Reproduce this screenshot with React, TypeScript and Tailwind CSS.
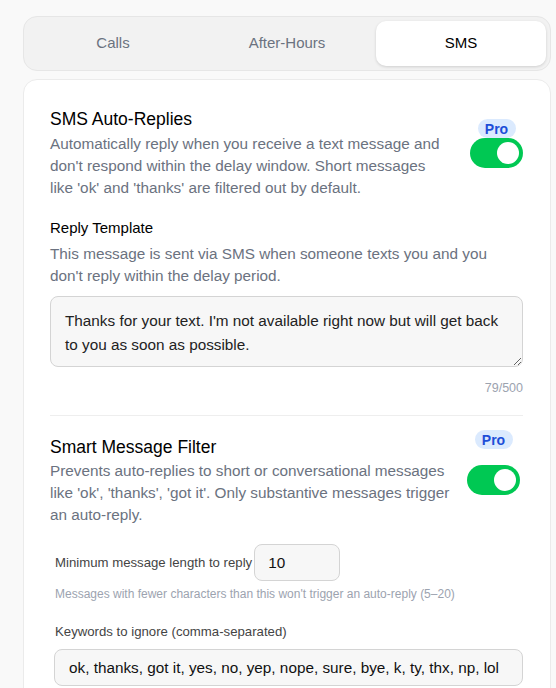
import React from "react";

function Toggle() {
  return (
    <div className="relative h-[30px] w-[53px] rounded-full bg-[#00c853]">
      <div className="absolute right-[4px] top-[4px] h-[22px] w-[22px] rounded-full bg-white" />
    </div>
  );
}

function Pro() {
  return (
    <div className="flex h-[19px] w-[38px] items-center justify-center rounded-full bg-[#dbeafe] text-[14px] font-bold leading-none text-[#1d4ed8]">
      Pro
    </div>
  );
}

export default function App() {
  return (
    <div
      className="min-h-[688px] bg-[#f9f9f9] pl-[23px] pr-[5px] pt-[16px]"
      style={{ fontFamily: '"Liberation Sans", Arial, sans-serif' }}
    >
      {/* Tabs */}
      <div className="grid h-[55px] grid-cols-3 gap-[4px] rounded-[14px] border border-[#e6e6e6] bg-[#f2f2f2] p-[4px]">
        <div className="flex items-center justify-center text-[15px] text-[#6b7280]">Calls</div>
        <div className="flex items-center justify-center text-[15px] text-[#6b7280]">After-Hours</div>
        <div className="flex items-center justify-center rounded-[10px] bg-white text-[15px] text-black shadow-[0_1px_3px_rgba(0,0,0,0.15)]">
          SMS
        </div>
      </div>

      {/* Card */}
      <div className="mt-[8px] rounded-[14px] border border-[#ebebeb] bg-white pl-[26px] pr-[27px] pt-[27px] pb-[20px]">
        {/* Section 1 */}
        <div className="flex items-start justify-between">
          <div className="w-[401px]">
            <div className="text-[17.5px] leading-[24px] text-black">SMS Auto-Replies</div>
            <div className="mt-[2px] text-[15.3px] leading-[22px] text-[#6b7280]">
              Automatically reply when you receive a text message and don't respond within the delay window. Short messages like 'ok' and 'thanks' are filtered out by default.
            </div>
          </div>
          <div className="mt-[12px] flex flex-col items-center">
            <Pro />
            <Toggle />
          </div>
        </div>

        <div className="mt-[18px] text-[15px] leading-[22px] text-black">Reply Template</div>
        <div className="mt-[4px] text-[15.3px] leading-[22px] text-[#6b7280]">
          This message is sent via SMS when someone texts you and you don't reply within the delay period.
        </div>
        <textarea
          className="mt-[9px] block h-[71px] w-full resize-y rounded-[8px] border border-[#d4d4d4] bg-[#f7f7f7] px-[14px] pt-[12px] text-[15.3px] leading-[24px] text-[#222] outline-none"
          defaultValue="Thanks for your text. I'm not available right now but will get back to you as soon as possible."
          style={{ fontFamily: '"Liberation Sans", Arial, sans-serif' }}
        />
        <div className="mt-[13px] text-right text-[12.5px] leading-[16px] text-[#9ca3af]">79/500</div>

        <div className="mt-[19px] h-px bg-[#eeeeee]" />

        {/* Section 2 */}
        <div className="mt-[19px] flex items-start justify-between">
          <div className="w-[401px]">
            <div className="text-[17.5px] leading-[24px] text-black">Smart Message Filter</div>
            <div className="mt-[1px] text-[15.3px] leading-[22px] text-[#6b7280]">
              Prevents auto-replies to short or conversational messages like 'ok', 'thanks', 'got it'. Only substantive messages trigger an auto-reply.
            </div>
          </div>
          <div className="mr-[3px] mt-[-5px] flex flex-col items-center">
            <Pro />
            <div className="mt-[16px]">
              <Toggle />
            </div>
          </div>
        </div>

        <div className="mt-[18px] flex items-center pl-[5px]">
          <span className="text-[13.2px] leading-[18px] text-[#444]">Minimum message length to reply</span>
          <input
            className="ml-[2px] h-[37px] w-[86px] rounded-[8px] border border-[#d4d4d4] bg-[#f7f7f7] px-[13px] text-[15.3px] text-[#111] outline-none"
            defaultValue="10"
            style={{ fontFamily: '"Liberation Sans", Arial, sans-serif' }}
          />
        </div>
        <div className="mt-[5px] pl-[5px] text-[12px] leading-[16px] text-[#9ca3af]">
          Messages with fewer characters than this won't trigger an auto-reply (5–20)
        </div>
        <div className="mt-[21px] pl-[5px] text-[13.2px] leading-[18px] text-[#444]">
          Keywords to ignore (comma-separated)
        </div>
        <div className="pl-[4px]">
          <input
            className="mt-[8px] block h-[37px] w-full rounded-[8px] border border-[#d4d4d4] bg-[#f7f7f7] px-[14px] text-[15.3px] text-[#111] outline-none"
            defaultValue="ok, thanks, got it, yes, no, yep, nope, sure, bye, k, ty, thx, np, lol"
            style={{ fontFamily: '"Liberation Sans", Arial, sans-serif' }}
          />
        </div>
      </div>
    </div>
  );
}
